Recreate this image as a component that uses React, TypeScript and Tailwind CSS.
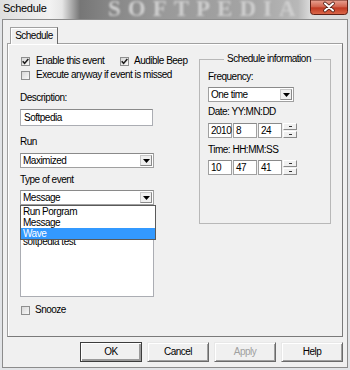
import React from 'react'

const ui = "font-['Liberation_Sans',Arial,sans-serif] text-[10px] leading-[12px] tracking-[-0.5px] text-black"

function Check({ checked }: { checked?: boolean }) {
  return (
    <span className="w-[9px] h-[9px] shrink-0 border border-[#8e8f8f] bg-[linear-gradient(135deg,#d8d8d8,#f8f8f8)] flex items-center justify-center">
      {checked && (
        <svg width="7" height="7" viewBox="0 0 7 7">
          <path d="M0.7 3.3 L2.6 5.4 L6.3 1.1" stroke="#1c1c1c" strokeWidth="1.6" fill="none" />
        </svg>
      )}
    </span>
  )
}

function Arrow() {
  return (
    <svg width="7" height="4" viewBox="0 0 7 4">
      <path d="M0 0 H7 L3.5 4 Z" fill="#000" />
    </svg>
  )
}

function CloseButton() {
  return (
    <svg width="38" height="15" viewBox="0 0 38 15" className="block">
      <defs>
        <linearGradient id="cg" x1="0" y1="0" x2="0" y2="1">
          <stop offset="0" stopColor="#e9a595" />
          <stop offset="0.45" stopColor="#d26650" />
          <stop offset="0.55" stopColor="#c03a22" />
          <stop offset="1" stopColor="#dc6a4c" />
        </linearGradient>
      </defs>
      <path d="M0.5 0 V11.5 Q0.5 14.5 3.5 14.5 H34.5 Q37.5 14.5 37.5 11.5 V0 Z" fill="url(#cg)" stroke="#5e2016" />
      <path d="M15 3.5 L23 10.5 M23 3.5 L15 10.5" stroke="#4a1a10" strokeWidth="3.6" strokeLinecap="round" />
      <path d="M15 3.5 L23 10.5 M23 3.5 L15 10.5" stroke="#ffffff" strokeWidth="2" strokeLinecap="round" />
    </svg>
  )
}

function Combo({ value, className }: { value: string; className: string }) {
  return (
    <div className={"h-[15px] bg-white border border-[#a0a0a0] border-t-[#8a8a8a] flex items-center " + className}>
      <span className="flex-1 pl-[2px] leading-[13px]">{value}</span>
      <span className="w-[12px] h-[11px] mr-[1px] bg-[#f0f0f0] border border-[#c8c8c8] border-r-[#8a8a8a] border-b-[#8a8a8a] flex items-center justify-center">
        <Arrow />
      </span>
    </div>
  )
}

function NumBox({ value }: { value: string }) {
  return (
    <div className="w-[24px] h-[15px] bg-white border border-[#a0a0a0] border-t-[#8a8a8a] pl-[2px] flex items-center">
      {value}
    </div>
  )
}

function Spinner() {
  return (
    <div className="w-[14px] h-[15px] flex flex-col gap-[1px]">
      <div className="h-[7px] bg-[#f0f0f0] border border-t-white border-l-white border-r-[#8a8a8a] border-b-[#8a8a8a] flex items-center justify-center">
        <span className="w-[3px] h-[1px] bg-[#303030]" />
      </div>
      <div className="h-[7px] bg-[#f0f0f0] border border-t-white border-l-white border-r-[#8a8a8a] border-b-[#8a8a8a] flex items-center justify-center">
        <span className="w-[3px] h-[1px] bg-[#303030]" />
      </div>
    </div>
  )
}

function Button({ label, primary, disabled }: { label: string; primary?: boolean; disabled?: boolean }) {
  return (
    <div
      className={
        "w-[62px] h-[20px] bg-[#f0f0f0] flex items-center justify-center " +
        (primary
          ? "border border-[#3c3c3c] shadow-[inset_1px_1px_0_#ffffff,inset_-2px_-2px_0_#9a9a9a]"
          : "border border-t-[#e8e8e8] border-l-[#e8e8e8] border-r-[#6a6a6a] border-b-[#6a6a6a] shadow-[inset_1px_1px_0_#ffffff,inset_-1px_-1px_0_#a0a0a0]") +
        (disabled ? " text-[#a0a0a0]" : "")
      }
    >
      {label}
    </div>
  )
}

export default function App() {
  return (
    <div className={"w-[350px] h-[370px] overflow-hidden bg-[#e2e4e7] " + ui}>
      {/* title bar */}
      <div className="relative h-[19px] overflow-hidden flex bg-[linear-gradient(90deg,#dedede_0px,#f2f2f2_50px,#e6e6e6_62px,#767676_80px,#848484_105px,#999999_160px,#a4a4a4_250px,#b8b8b8_298px,#dadada_310px)]">
        <span className="absolute left-[108px] top-[-3px] w-[200px] overflow-hidden whitespace-nowrap font-['Liberation_Serif',serif] font-bold text-[23px] leading-[24px] tracking-[7px] text-[#cfcfcf] blur-[1px]">
          SOFTPEDIA
        </span>
        <span className="relative flex-1 pl-[3px] pt-[2px] text-[11px] leading-[12px] tracking-[-0.3px]">Schedule</span>
        <div className="relative z-10 mr-[2px]">
          <CloseButton />
        </div>
      </div>

      {/* window body */}
      <div className="ml-[2px] w-[346px] h-[349px] border border-[#8c8c8c] bg-[#f0f0f0] flex flex-col">
        <div className="pt-[7px] pl-[7px] flex">
          <div className="relative z-10 -mb-[1px] w-[48px] h-[17px] bg-[#f0f0f0] border border-b-0 border-[#a0a0a0] border-r-[#6a6a6a] shadow-[inset_1px_1px_0_#ffffff] flex items-center justify-center">
            Schedule
          </div>
        </div>

        <div className="ml-[4px] w-[336px] h-[294px] border border-[#a0a0a0] border-r-[#7a7a7a] border-b-[#7a7a7a] shadow-[inset_1px_1px_0_#ffffff] flex">
          {/* left column */}
          <div className="w-[191px] pl-[12px] flex flex-col">
            <div className="mt-[10px] h-[14px] pl-[1px] flex items-center">
              <div className="w-[99px] flex items-center gap-[6px]">
                <Check checked />
                <span>Enable this event</span>
              </div>
              <div className="flex items-center gap-[5px]">
                <Check checked />
                <span>Audible Beep</span>
              </div>
            </div>
            <div className="h-[14px] pl-[1px] flex items-center gap-[6px]">
              <Check />
              <span>Execute anyway if event is missed</span>
            </div>

            <div className="mt-[10px] h-[12px]">Description:</div>
            <div className="mt-[5px] w-[133px] h-[17px] bg-white border border-[#abadb3] border-t-[#8a8a8a] pl-[3px] flex items-center">
              Softpedia
            </div>

            <div className="mt-[10px] h-[12px]">Run</div>
            <Combo value="Maximized" className="mt-[5px] w-[134px]" />

            <div className="mt-[6px] h-[12px]">Type of event</div>
            <div className="relative mt-[4px]">
              <Combo value="Message" className="w-[134px]" />
              <div className="absolute z-20 left-0 top-[15px] w-[136px] bg-white border border-[#5a5a5a] flex flex-col">
                <div className="h-[11px] pl-[2px] leading-[11px]">Run Porgram</div>
                <div className="h-[11px] pl-[2px] leading-[11px]">Message</div>
                <div className="h-[11px] pl-[2px] leading-[11px] bg-[#3399ff] text-white">Wave</div>
              </div>
            </div>
            <div className="mt-[2px] w-[134px] h-[90px] bg-white border border-[#abadb3] pl-[2px] pt-[28px]">
              softpedia test
            </div>

            <div className="mt-[6px] h-[14px] pl-[1px] flex items-center gap-[5px]">
              <Check />
              <span>Snooze</span>
            </div>
          </div>

          {/* right column */}
          <fieldset className="mt-[9px] w-[132px] h-[171px] border border-[#b8b8b8] pl-[8px] flex flex-col">
            <legend className="mx-auto px-[3px] h-[12px]">Schedule information</legend>
            <div className="mt-[6px] h-[12px]">Frequency:</div>
            <Combo value="One time" className="mt-[4px] w-[86px]" />
            <div className="mt-[4px] h-[12px]">Date: YY:MN:DD</div>
            <div className="mt-[5px] flex gap-[1px]">
              <NumBox value="2010" />
              <NumBox value="8" />
              <NumBox value="24" />
              <Spinner />
            </div>
            <div className="mt-[6px] h-[12px]">Time: HH:MM:SS</div>
            <div className="mt-[4px] flex gap-[1px]">
              <NumBox value="10" />
              <NumBox value="47" />
              <NumBox value="41" />
              <Spinner />
            </div>
          </fieldset>
        </div>

        <div className="mt-[5px] pr-[4px] flex justify-end gap-[5px]">
          <Button label="OK" primary />
          <Button label="Cancel" />
          <Button label="Apply" disabled />
          <Button label="Help" />
        </div>
      </div>
    </div>
  )
}
